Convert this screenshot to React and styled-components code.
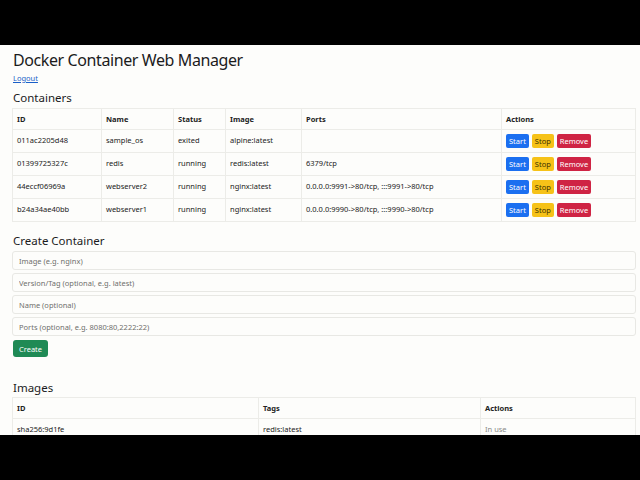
import React from 'react'
import styled, { createGlobalStyle } from 'styled-components'

const Global = createGlobalStyle`
  html, body { margin: 0; padding: 0; background: #000; }
  body { font-family: "Noto Sans", "DejaVu Sans", sans-serif; }
`

const Letterbox = styled.div`
  height: ${p => p.$h}px;
  background: #000;
`

const Screen = styled.div`
  height: 390px;
  overflow: hidden;
  background: #fdfdfb;
  padding: 0 4px 0 12px;
  display: flex;
  flex-direction: column;
  & > * { flex-shrink: 0; }
`

const Title = styled.h1`
  margin: 5px 0 0 1px;
  font-size: 16px;
  letter-spacing: -0.4px;
  font-weight: 400;
  line-height: 20px;
  color: #1b1b1b;
`

const Logout = styled.a`
  margin: 3px 0 0 1px;
  font-size: 7.5px;
  line-height: 10px;
  color: #1a5fc8;
  text-decoration: underline;
`

const Heading = styled.h2`
  margin: ${p => p.$top}px 0 0 1px;
  font-size: 11.5px;
  font-weight: 400;
  line-height: 16px;
  color: #1b1b1b;
`

const Table = styled.table`
  margin-top: ${p => p.$top}px;
  width: 100%;
  border-collapse: collapse;
  table-layout: fixed;
  font-size: 7.5px;
  color: #222;
  border: 1px solid #ecece8;
`

const Th = styled.th`
  text-align: left;
  font-weight: 700;
  height: 20px;
  padding: 0 4px;
  border: 1px solid #ecece8;
`

const Td = styled.td`
  height: 19px;
  padding: 0 4px 3px;
  border: 1px solid #ecece8;
  white-space: nowrap;
  color: ${p => (p.$muted ? '#8a8a88' : '#222')};
`

const Actions = styled.div`
  display: flex;
  gap: 3px;
  margin-top: 3px;
`

const Btn = styled.button`
  border: none;
  border-radius: 2px;
  height: 14px;
  padding: 0 3px;
  font-family: inherit;
  font-size: 7.5px;
  line-height: 14px;
  background: ${p => p.$bg};
  color: ${p => p.$fg};
`

const Form = styled.div`
  display: flex;
  flex-direction: column;
  gap: 3px;
  margin-top: 2px;
`

const Input = styled.input`
  box-sizing: border-box;
  width: 100%;
  height: 19px;
  border: 1px solid #e8e8e4;
  border-radius: 3px;
  background: #fdfdfb;
  padding: 0 6px;
  font-family: inherit;
  font-size: 7.5px;
  &::placeholder { color: #6f6f6c; }
`

const CreateBtn = styled.button`
  align-self: flex-start;
  margin: 4px 0 0 1px;
  height: 17px;
  width: 35px;
  border: none;
  border-radius: 3px;
  background: #1f8a55;
  color: #fff;
  font-family: inherit;
  font-size: 7.5px;
`

const containers = [
  ['011ac2205d48', 'sample_os', 'exited', 'alpine:latest', ''],
  ['01399725327c', 'redis', 'running', 'redis:latest', '6379/tcp'],
  ['44eccf06969a', 'webserver2', 'running', 'nginx:latest', '0.0.0.0:9991->80/tcp, :::9991->80/tcp'],
  ['b24a34ae40bb', 'webserver1', 'running', 'nginx:latest', '0.0.0.0:9990->80/tcp, :::9990->80/tcp'],
]

export default function App() {
  return (
    <>
      <Global />
      <Letterbox $h={45} />
      <Screen>
        <Title>Docker Container Web Manager</Title>
        <Logout href="#">Logout</Logout>
        <Heading $top={7}>Containers</Heading>
        <Table $top={2}>
          <colgroup>
            <col style={{ width: 89 }} />
            <col style={{ width: 72 }} />
            <col style={{ width: 52 }} />
            <col style={{ width: 76 }} />
            <col style={{ width: 200 }} />
            <col />
          </colgroup>
          <thead>
            <tr>
              <Th>ID</Th><Th>Name</Th><Th>Status</Th><Th>Image</Th><Th>Ports</Th><Th>Actions</Th>
            </tr>
          </thead>
          <tbody>
            {containers.map(c => (
              <tr key={c[0]}>
                {c.map((v, i) => <Td key={i}>{v}</Td>)}
                <Td>
                  <Actions>
                    <Btn $bg="#1b6ff0" $fg="#fff">Start</Btn>
                    <Btn $bg="#f6c218" $fg="#3a3000">Stop</Btn>
                    <Btn $bg="#cf2444" $fg="#fff">Remove</Btn>
                  </Actions>
                </Td>
              </tr>
            ))}
          </tbody>
        </Table>
        <Heading $top={11}>Create Container</Heading>
        <Form>
          <Input placeholder="Image (e.g. nginx)" />
          <Input placeholder="Version/Tag (optional, e.g. latest)" />
          <Input placeholder="Name (optional)" />
          <Input placeholder="Ports (optional, e.g. 8080:80,2222:22)" />
        </Form>
        <CreateBtn>Create</CreateBtn>
        <Heading $top={23}>Images</Heading>
        <Table $top={1}>
          <colgroup>
            <col style={{ width: 246 }} />
            <col style={{ width: 222 }} />
            <col />
          </colgroup>
          <thead>
            <tr><Th>ID</Th><Th>Tags</Th><Th>Actions</Th></tr>
          </thead>
          <tbody>
            <tr>
              <Td>sha256:9d1fe</Td>
              <Td>redis:latest</Td>
              <Td $muted>In use</Td>
            </tr>
          </tbody>
        </Table>
      </Screen>
      <Letterbox $h={45} />
    </>
  )
}
